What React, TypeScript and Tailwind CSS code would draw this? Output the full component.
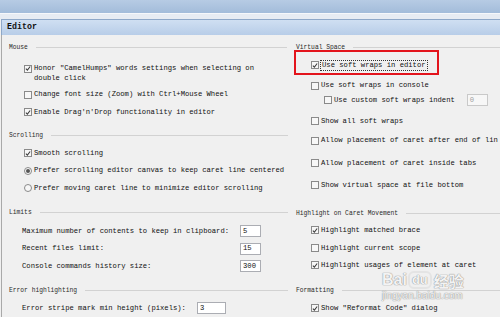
import React from "react"

const Check = ({ checked }: { checked?: boolean }) => (
    <div className="w-[8px] h-[8px] flex-none border border-[#8a8a8a] bg-[#f7f7f7] flex items-center justify-center">
        {checked && (
            <svg width="7" height="7" viewBox="0 0 7 7">
                <path d="M1 3.6 L2.8 5.4 L6 1.2" fill="none" stroke="#3c3c3c" strokeWidth="1.2" />
            </svg>
        )}
    </div>
)

const Radio = ({ checked }: { checked?: boolean }) => (
    <div className="w-[8px] h-[8px] flex-none rounded-full border border-[#8a8a8a] bg-[#f7f7f7] flex items-center justify-center">
        {checked && <div className="w-[4px] h-[4px] rounded-full bg-[#555]" />}
    </div>
)

interface SectionHeaderType {
    label: string,
    className?: string,
    lineClassName?: string
}

const SectionHeader = ({ label, className, lineClassName }: SectionHeaderType) => (
    <div className={"h-[14px] flex items-center pl-[7px] " + (className ?? "")}>
        <span className="text-[6.3px] text-[#2a2a2a] whitespace-nowrap">{label}</span>
        <div className={"flex-1 h-[2px] border-t border-[#d2d2d2] border-b-white ml-[8px] " + (lineClassName ?? "")} />
    </div>
)

interface OptionRowType {
    label: string,
    checked?: boolean,
    radio?: boolean,
    className?: string
}

const OptionRow = ({ label, checked, radio, className }: OptionRowType) => (
    <div className={"h-[18px] flex items-center gap-[2px] whitespace-nowrap " + (className ?? "pl-[23px]")}>
        {radio ? <Radio checked={checked} /> : <Check checked={checked} />}
        <span>{label}</span>
    </div>
)

interface FieldRowType {
    label: string,
    value: string,
    labelWidth: string,
    inputWidth: string,
    className?: string
}

const FieldRow = ({ label, value, labelWidth, inputWidth, className }: FieldRowType) => (
    <div className={"h-[18px] flex items-center pl-[20px] whitespace-nowrap " + (className ?? "")}>
        <span className={labelWidth}>{label}</span>
        <div className={"h-[12px] bg-white border border-[#abadb3] pl-[2px] flex items-center leading-none " + inputWidth}>
            {value}
        </div>
    </div>
)

export default function App() {
    return (
        <div className="w-[500px] h-[317px] overflow-hidden bg-[#f0f0f0] relative font-['Liberation_Mono',monospace] text-[7.2px] text-[#111]">
            <div className="h-[13px] bg-gradient-to-b from-[#b6cbe4] to-[#a3bcda]" />
            <div className="h-[6px] bg-[#e7ecf3] border-t border-[#f6f8fb]" />
            <div className="h-[16px] ml-[1px] bg-gradient-to-b from-[#cfdff2] to-[#b8cde8] border-t border-l border-[#8ea8c9] flex items-center pl-[5px]">
                <span className="font-bold text-[8.3px] text-[#111]">Editor</span>
            </div>

            <div className="flex ml-[1px] border-l border-[#a9a9a9] h-[282px]">
                <div className="w-[287px] flex-none flex flex-col">
                    <SectionHeader label="Mouse" className="mt-[6px]" lineClassName="mr-[2px]" />
                    <div className="h-[28px] mt-[4px] pt-[4px] pl-[22px] flex items-start gap-[2px]">
                        <div className="mt-[2px]"><Check checked /></div>
                        <div className="leading-[10px]">
                            <div className="whitespace-nowrap">Honor "CamelHumps" words settings when selecting on</div>
                            <div>double click</div>
                        </div>
                    </div>
                    <OptionRow label="Change font size (Zoom) with Ctrl+Mouse Wheel" className="pl-[22px]" />
                    <OptionRow label="Enable Drag'n'Drop functionality in editor" checked className="pl-[22px]" />

                    <SectionHeader label="Scrolling" className="mt-[8px]" lineClassName="mr-[1px]" />
                    <OptionRow label="Smooth scrolling" checked className="mt-[2px] pl-[22px]" />
                    <OptionRow label="Prefer scrolling editor canvas to keep caret line centered" radio checked className="pl-[22px]" />
                    <OptionRow label="Prefer moving caret line to minimize editor scrolling" radio className="pl-[22px]" />

                    <SectionHeader label="Limits" className="mt-[9px]" lineClassName="mr-[1px]" />
                    <FieldRow label="Maximum number of contents to keep in clipboard:" value="5" labelWidth="w-[218px]" inputWidth="w-[21px]" className="mt-[3px]" />
                    <FieldRow label="Recent files limit:" value="15" labelWidth="w-[218px]" inputWidth="w-[21px]" />
                    <FieldRow label="Console commands history size:" value="300" labelWidth="w-[218px]" inputWidth="w-[21px]" />

                    <SectionHeader label="Error highlighting" className="mt-[9px]" lineClassName="mr-[1px]" />
                    <FieldRow label="Error stripe mark min height (pixels):" value="3" labelWidth="w-[175px]" inputWidth="w-[29px]" className="mt-[2px]" />
                </div>

                <div className="flex-1 min-w-0 flex flex-col">
                    <SectionHeader label="Virtual Space" className="mt-[6px]" />
                    <div className="h-[18px] mt-[2px] flex items-center gap-[2px] pl-[22px] whitespace-nowrap relative">
                        <Check checked />
                        <span className="outline outline-1 outline-dotted outline-[#333] px-[1px] leading-[9px]">Use soft wraps in editor</span>
                        <div className="absolute left-[5px] top-[-7px] w-[145px] h-[25px] border-2 border-[#e3141c]" />
                    </div>
                    <OptionRow label="Use soft wraps in console" className="mt-[3px] pl-[22px]" />
                    <div className="h-[12px] flex items-center gap-[2px] pl-[35px] whitespace-nowrap">
                        <Check />
                        <span>Use custom soft wraps indent</span>
                        <div className="ml-[10px] w-[21px] h-[12px] border border-[#c9c9c9] bg-[#f7f7f7] text-[#a0a0a0] pl-[2px] flex items-center leading-none">0</div>
                    </div>
                    <OptionRow label="Show all soft wraps" className="mt-[6px] pl-[22px]" />
                    <div className="h-[18px] mt-[2px] flex items-center gap-[2px] pl-[22px] whitespace-nowrap overflow-hidden">
                        <Check />
                        <span>Allow placement of caret after end of lin</span>
                    </div>
                    <OptionRow label="Allow placement of caret inside tabs" className="mt-[5px] pl-[22px]" />
                    <OptionRow label="Show virtual space at file bottom" className="mt-[5px] pl-[22px]" />

                    <SectionHeader label="Highlight on Caret Movement" className="mt-[13px]" />
                    <OptionRow label="Highlight matched brace" checked className="mt-[1px] pl-[22px]" />
                    <OptionRow label="Highlight current scope" className="pl-[22px]" />
                    <OptionRow label="Highlight usages of element at caret" checked className="pl-[22px]" />

                    <SectionHeader label="Formatting" className="mt-[10px]" />
                    <OptionRow label={'Show "Reformat Code" dialog'} checked className="mt-[2px] pl-[22px]" />
                </div>
            </div>

            <div className="absolute left-[382px] top-[271px] flex flex-col items-start text-white/90 font-['Liberation_Sans',sans-serif] [text-shadow:0_0_1px_#8a8a8a,0_0_1px_#8a8a8a]">
                <div className="flex items-center text-[16px] font-bold leading-none">
                    <span>Bai</span>
                    <span className="ml-[1px] px-[2px] rounded-[6px] border-2 border-[#e4e4e4] text-[13px] leading-[14px]">du</span>
                    <span className="ml-[2px] text-[15px] font-['Noto_Sans_CJK_SC',sans-serif]">经验</span>
                </div>
                <div className="text-[10px] leading-none mt-[2px]">jingyan.baidu.com</div>
            </div>
        </div>
    )
}
